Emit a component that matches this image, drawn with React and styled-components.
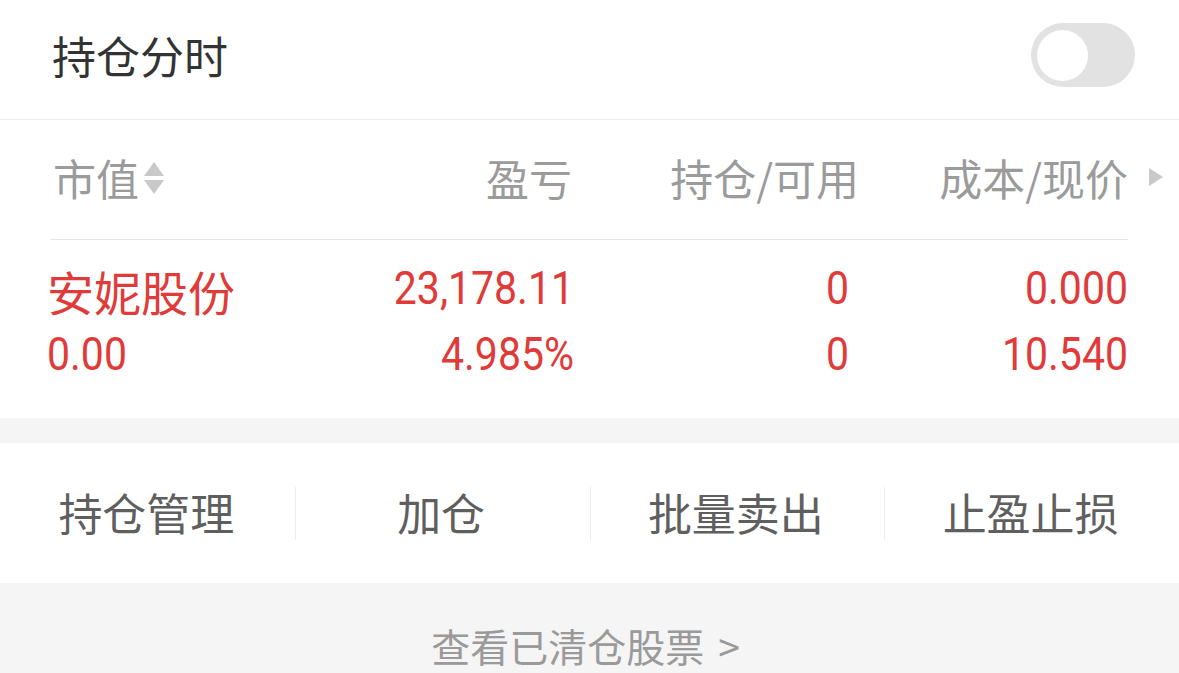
import React from "react";
import styled, { createGlobalStyle } from "styled-components";

const Global = createGlobalStyle`
  html, body { margin: 0; padding: 0; background: #ffffff; }
  body { font-family: "Noto Sans CJK SC", "Noto Sans", sans-serif; }
  * { box-sizing: border-box; }
`;

const CJK = `"Noto Sans CJK SC", "Noto Sans", sans-serif`;
const NUM = `Roboto, "Noto Sans CJK SC", sans-serif`;
const RED = "#e03a39";

const Page = styled.div`
  width: 1179px;
  height: 673px;
  overflow: hidden;
  background: #f5f5f5;
  display: flex;
  flex-direction: column;
`;

const TopBar = styled.div`
  height: 120px;
  flex: 0 0 120px;
  background: #fff;
  border-bottom: 1px solid #ececec;
  display: flex;
  align-items: center;
  justify-content: space-between;
  padding: 0 44px 9px 52px;
`;

const Title = styled.div`
  font-family: ${CJK};
  font-size: 44px;
  color: #333;
  line-height: 1;
`;

const Toggle = styled.div`
  width: 104px;
  height: 64px;
  border-radius: 32px;
  background: #e2e2e2;
  display: flex;
  align-items: center;
  padding: 0 6px;
`;

const Knob = styled.div`
  width: 51px;
  height: 51px;
  border-radius: 50%;
  background: #fff;
`;

const HeadRow = styled.div`
  height: 120px;
  flex: 0 0 120px;
  background: #fff;
  display: flex;
  padding-left: 50px;
`;

const Columns = styled.div`
  flex: 0 0 1078px;
  display: grid;
  grid-template-columns: 261px 261px 287px 269px;
  align-items: center;
  border-bottom: 1px solid #e6e6e6;
`;

const HeadCell = styled.div`
  font-family: ${CJK};
  font-size: 43px;
  color: #9b9b9b;
  line-height: 1;
  display: flex;
  align-items: center;
  justify-content: ${(p) => (p.$left ? "flex-start" : "flex-end")};
  padding-left: ${(p) => (p.$left ? "3px" : "0")};
  padding-bottom: 4px;
`;

const SortIcon = styled.svg`
  width: 22px;
  height: 36px;
  margin-left: 4px;
  margin-top: 2px;
`;

const MoreCell = styled.div`
  flex: 1;
  display: flex;
  align-items: center;
  padding-left: 20px;
  padding-bottom: 6px;
`;

const DataRow = styled.div`
  flex: 0 0 178px;
  background: #fff;
  padding: 15px 51px 0 47px;
`;

const DataGrid = styled.div`
  display: grid;
  grid-template-columns: 263px 264px 275px 279px;
  grid-auto-rows: 66px;
  align-items: center;
`;

const Val = styled.div`
  font-family: ${(p) => (p.$cjk ? CJK : NUM)};
  font-size: ${(p) => (p.$cjk ? "47px" : "41px")};
  color: ${RED};
  line-height: 1;
  text-align: ${(p) => (p.$left ? "left" : "right")};
  transform: ${(p) => (p.$cjk ? "none" : "scaleY(1.12)")};
  transform-origin: center;
  padding-top: ${(p) => (p.$cjk ? "4px" : "0")};
`;

const Gap = styled.div`
  flex: 0 0 25px;
`;

const Actions = styled.div`
  flex: 0 0 140px;
  background: #fff;
  display: grid;
  grid-template-columns: repeat(4, 1fr);
  align-items: center;
`;

const Action = styled.div`
  font-family: ${CJK};
  font-size: 44px;
  color: #5f5f5f;
  line-height: 1;
  height: 53px;
  display: flex;
  align-items: center;
  justify-content: center;
  padding-right: 3px;
  border-left: 1px solid ${(p) => (p.$first ? "transparent" : "#ececec")};
  padding-bottom: 2px;
`;

const Footer = styled.div`
  flex: 1;
  display: flex;
  justify-content: center;
  padding-top: 43px;
  padding-right: 8px;
`;

const FooterLink = styled.div`
  font-family: ${CJK};
  font-size: 39px;
  color: #9a9a9a;
  line-height: 1;
  display: flex;
  align-items: baseline;
`;

const Chevron = styled.span`
  margin-left: 14px;
`;

export default function App() {
  return (
    <>
      <Global />
      <Page>
        <TopBar>
          <Title>持仓分时</Title>
          <Toggle>
            <Knob />
          </Toggle>
        </TopBar>

        <HeadRow>
          <Columns>
            <HeadCell $left>
              市值
              <SortIcon viewBox="0 0 22 36">
                <polygon points="11,1 21,15 1,15" fill="#c9c9c9" />
                <polygon points="1,19 21,19 11,33" fill="#c9c9c9" />
              </SortIcon>
            </HeadCell>
            <HeadCell>盈亏</HeadCell>
            <HeadCell>持仓/可用</HeadCell>
            <HeadCell>成本/现价</HeadCell>
          </Columns>
          <MoreCell>
            <svg width="16" height="20" viewBox="0 0 16 20">
              <polygon points="1,1 15,10 1,19" fill="#c9c9c9" />
            </svg>
          </MoreCell>
        </HeadRow>

        <DataRow>
          <DataGrid>
            <Val $cjk $left>安妮股份</Val>
            <Val>23,178.11</Val>
            <Val>0</Val>
            <Val>0.000</Val>
            <Val $left>0.00</Val>
            <Val>4.985%</Val>
            <Val>0</Val>
            <Val>10.540</Val>
          </DataGrid>
        </DataRow>

        <Gap />

        <Actions>
          <Action $first>持仓管理</Action>
          <Action>加仓</Action>
          <Action>批量卖出</Action>
          <Action>止盈止损</Action>
        </Actions>

        <Footer>
          <FooterLink>
            查看已清仓股票<Chevron>&gt;</Chevron>
          </FooterLink>
        </Footer>
      </Page>
    </>
  );
}
